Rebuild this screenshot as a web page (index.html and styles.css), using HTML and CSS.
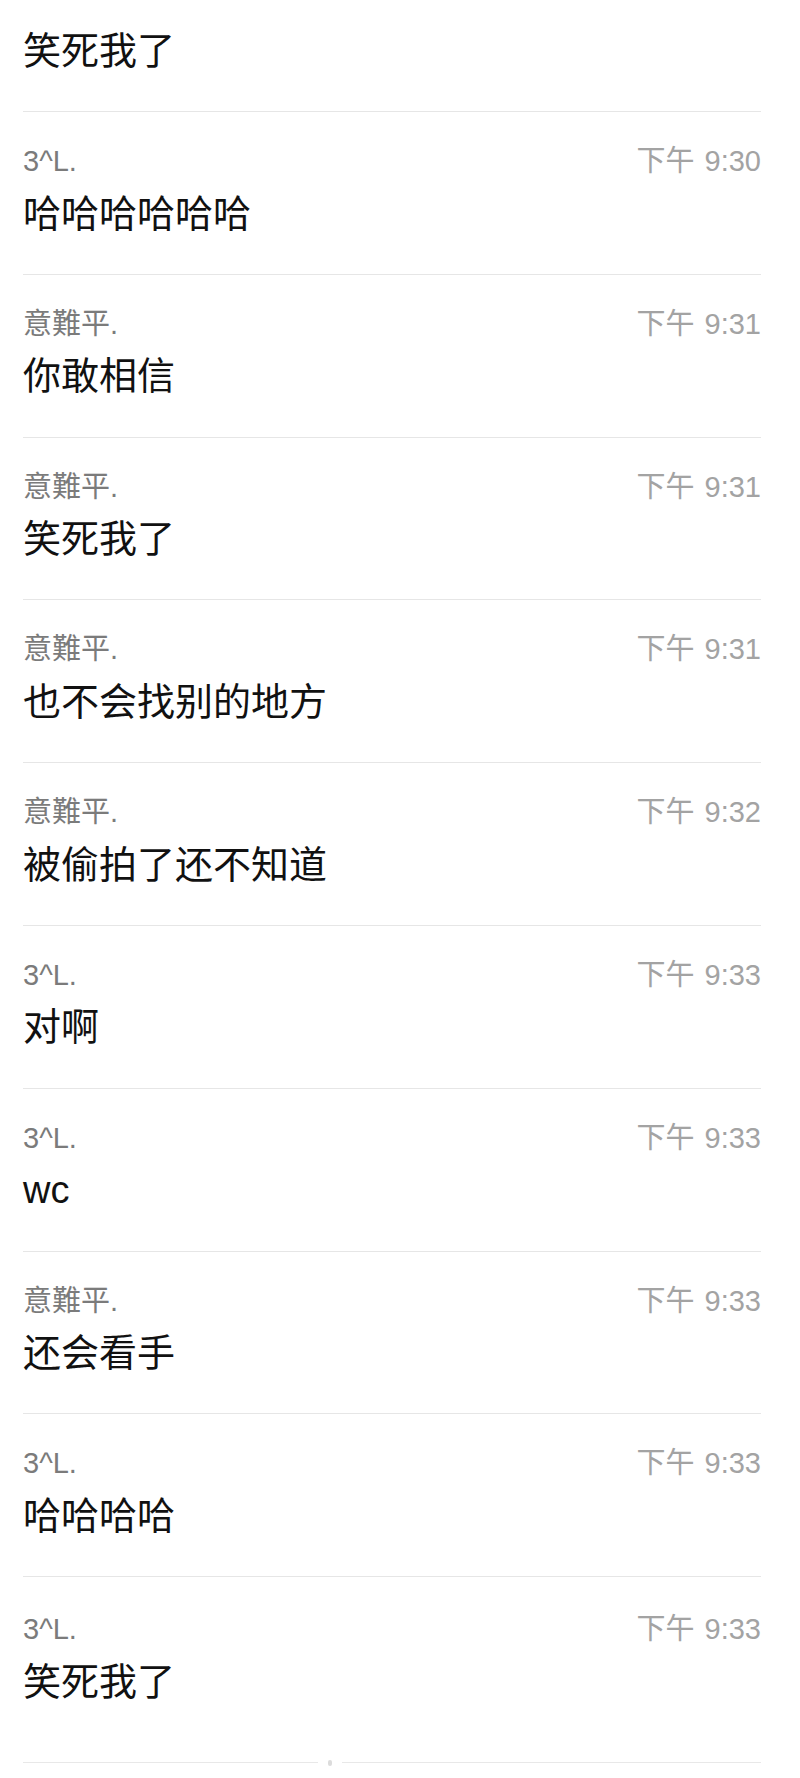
FILE: index.html
```html
<!DOCTYPE html>
<html>
<head>
  <title>Chat Log</title>
  <meta name="viewport" content="width=device-width, initial-scale=1.0">
  <link rel="stylesheet" href="styles.css">
</head>
<body>
  <div class="chat">
    <div class="msg first">
      <p class="text">笑死我了</p>
    </div>

    <div class="msg">
      <div class="meta"><span class="name">3^L.</span><span class="time">下午 9:30</span></div>
      <p class="text">哈哈哈哈哈哈</p>
    </div>

    <div class="msg">
      <div class="meta"><span class="name">意難平.</span><span class="time">下午 9:31</span></div>
      <p class="text">你敢相信</p>
    </div>

    <div class="msg">
      <div class="meta"><span class="name">意難平.</span><span class="time">下午 9:31</span></div>
      <p class="text">笑死我了</p>
    </div>

    <div class="msg">
      <div class="meta"><span class="name">意難平.</span><span class="time">下午 9:31</span></div>
      <p class="text">也不会找别的地方</p>
    </div>

    <div class="msg">
      <div class="meta"><span class="name">意難平.</span><span class="time">下午 9:32</span></div>
      <p class="text">被偷拍了还不知道</p>
    </div>

    <div class="msg">
      <div class="meta"><span class="name">3^L.</span><span class="time">下午 9:33</span></div>
      <p class="text">对啊</p>
    </div>

    <div class="msg">
      <div class="meta"><span class="name">3^L.</span><span class="time">下午 9:33</span></div>
      <p class="text">wc</p>
    </div>

    <div class="msg">
      <div class="meta"><span class="name">意難平.</span><span class="time">下午 9:33</span></div>
      <p class="text">还会看手</p>
    </div>

    <div class="msg">
      <div class="meta"><span class="name">3^L.</span><span class="time">下午 9:33</span></div>
      <p class="text">哈哈哈哈</p>
    </div>

    <div class="msg last">
      <div class="meta"><span class="name">3^L.</span><span class="time">下午 9:33</span></div>
      <p class="text">笑死我了</p>
    </div>

    <div class="end-line">
      <span class="seg left"></span>
      <span class="dot"></span>
      <span class="seg right"></span>
    </div>
  </div>
</body>
</html>
```

FILE: styles.css
```css
* {
  margin: 0;
  padding: 0;
  box-sizing: border-box;
}

body {
  background: #fff;
  font-family: 'Liberation Sans', 'Noto Sans CJK SC', sans-serif;
  color: #111;
}

.chat {
  width: 800px;
  padding: 0 39px 0 23px;
}

.msg {
  padding: 32px 0 37.3px;
  border-bottom: 1px solid #e6e6e6;
}

.msg.first {
  padding-top: 28px;
  padding-bottom: 37px;
}

.msg.last {
  padding-top: 35px;
  border-bottom: none;
}

.meta {
  display: flex;
  justify-content: space-between;
  align-items: center;
  height: 34px;
  margin-bottom: 12.5px;
  font-size: 29px;
  line-height: 34px;
}

.name {
  color: #7b7b7b;
}

.time {
  color: #a3a3a3;
  word-spacing: 2px;
}

.text {
  font-size: 38px;
  line-height: 46px;
  color: #111;
}

.end-line {
  display: flex;
  align-items: center;
  gap: 10px;
  margin-top: 18px;
  height: 6px;
}

.end-line .seg {
  height: 1px;
  background: #e8e8e8;
}

.end-line .left {
  width: 295px;
}

.end-line .right {
  flex: 1;
}

.end-line .dot {
  width: 4px;
  height: 6px;
  border-radius: 2px;
  background: #dcdcdc;
}
```
